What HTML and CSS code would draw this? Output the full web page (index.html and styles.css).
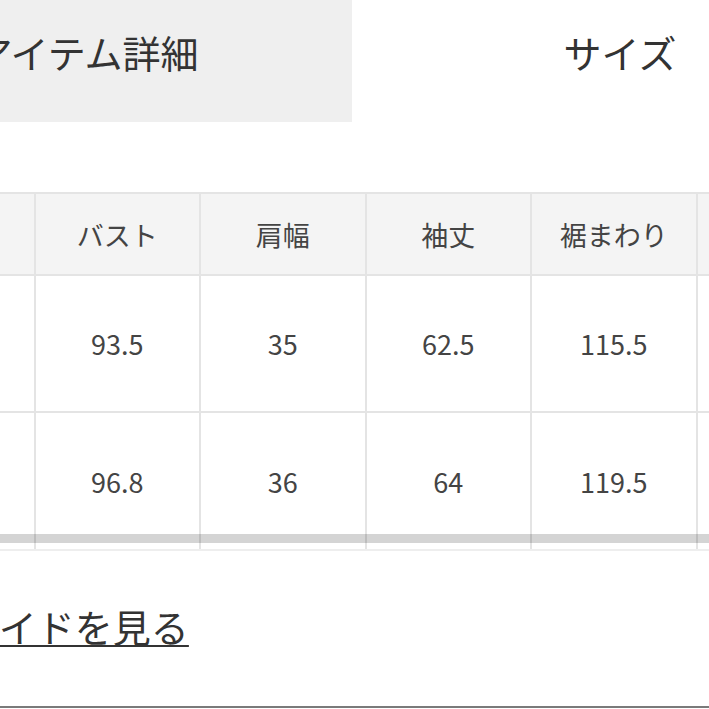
FILE: index.html
```html
<!DOCTYPE html>
<html lang="ja">
<head>
<meta charset="utf-8">
<link rel="stylesheet" href="styles.css">
</head>
<body>
<div class="tabs">
  <div class="tab tab-active">アイテム詳細</div>
  <div class="tab">サイズ</div>
</div>
<div class="table-wrap">
  <table class="size-table">
    <colgroup>
      <col class="c"><col class="c"><col class="c"><col class="c"><col class="c"><col class="c"><col class="c">
    </colgroup>
    <thead>
      <tr>
        <th>サイズ</th><th>バスト</th><th>肩幅</th><th>袖丈</th><th>裾まわり</th><th>着丈</th><th>総丈</th>
      </tr>
    </thead>
    <tbody>
      <tr class="row1">
        <td>S</td><td>93.5</td><td>35</td><td>62.5</td><td>115.5</td><td>56</td><td>60</td>
      </tr>
      <tr class="row2">
        <td>M</td><td>96.8</td><td>36</td><td>64</td><td>119.5</td><td>57</td><td>61</td>
      </tr>
    </tbody>
  </table>
  <div class="scrollbar"></div>
</div>
<div class="guide"><a class="guide-link" href="#">サイズガイドを見る</a></div>
<div class="bottom-rule"></div>
</body>
</html>
```
FILE: styles.css
```css
html, body {
  margin: 0;
  padding: 0;
  background: #ffffff;
  overflow: hidden;
}
body {
  width: 709px;
  height: 709px;
  font-family: "Noto Sans CJK JP", "Noto Sans", sans-serif;
  color: #333333;
}
.tabs {
  display: flex;
  margin-left: -184px;
  height: 122px;
}
.tab {
  flex: none;
  width: 536px;
  display: flex;
  justify-content: center;
  align-items: flex-start;
  padding-top: 33px;
  box-sizing: border-box;
  font-size: 38px;
  line-height: 38px;
  color: #333333;
}
.tab-active {
  background: #efefef;
  padding-left: 5px;
}
.table-wrap {
  position: relative;
  margin-top: 70px;
  margin-left: -132px;
  width: 1160px;
}
.size-table {
  border-collapse: collapse;
  table-layout: fixed;
  width: 1160px;
}
.size-table .c {
  width: 165.5px;
}
.size-table th,
.size-table td {
  border: 2px solid #e4e4e4;
  text-align: center;
  vertical-align: middle;
  padding: 0;
  font-weight: 400;
  color: #444444;
  font-size: 27px;
}
.size-table th {
  background: #f4f4f4;
  height: 80px;
}
.row1 td {
  height: 135px;
}
.row2 td {
  height: 136px;
}
.size-table tr:last-child td {
  border-bottom-color: #eeeeee;
}
.scrollbar {
  position: absolute;
  left: 0;
  right: 0;
  bottom: 8px;
  height: 9px;
  background: rgba(0, 0, 0, 0.17);
}
.guide {
  margin-top: 56px;
  margin-left: -152px;
  height: 38px;
}
.guide-link {
  font-size: 38px;
  line-height: 38px;
  color: #333333;
  text-decoration: underline;
  text-decoration-thickness: 2px;
  text-underline-offset: 3px;
  white-space: nowrap;
}
.bottom-rule {
  margin-top: 61px;
  border-top: 2px solid #7a7a7a;
}
```
